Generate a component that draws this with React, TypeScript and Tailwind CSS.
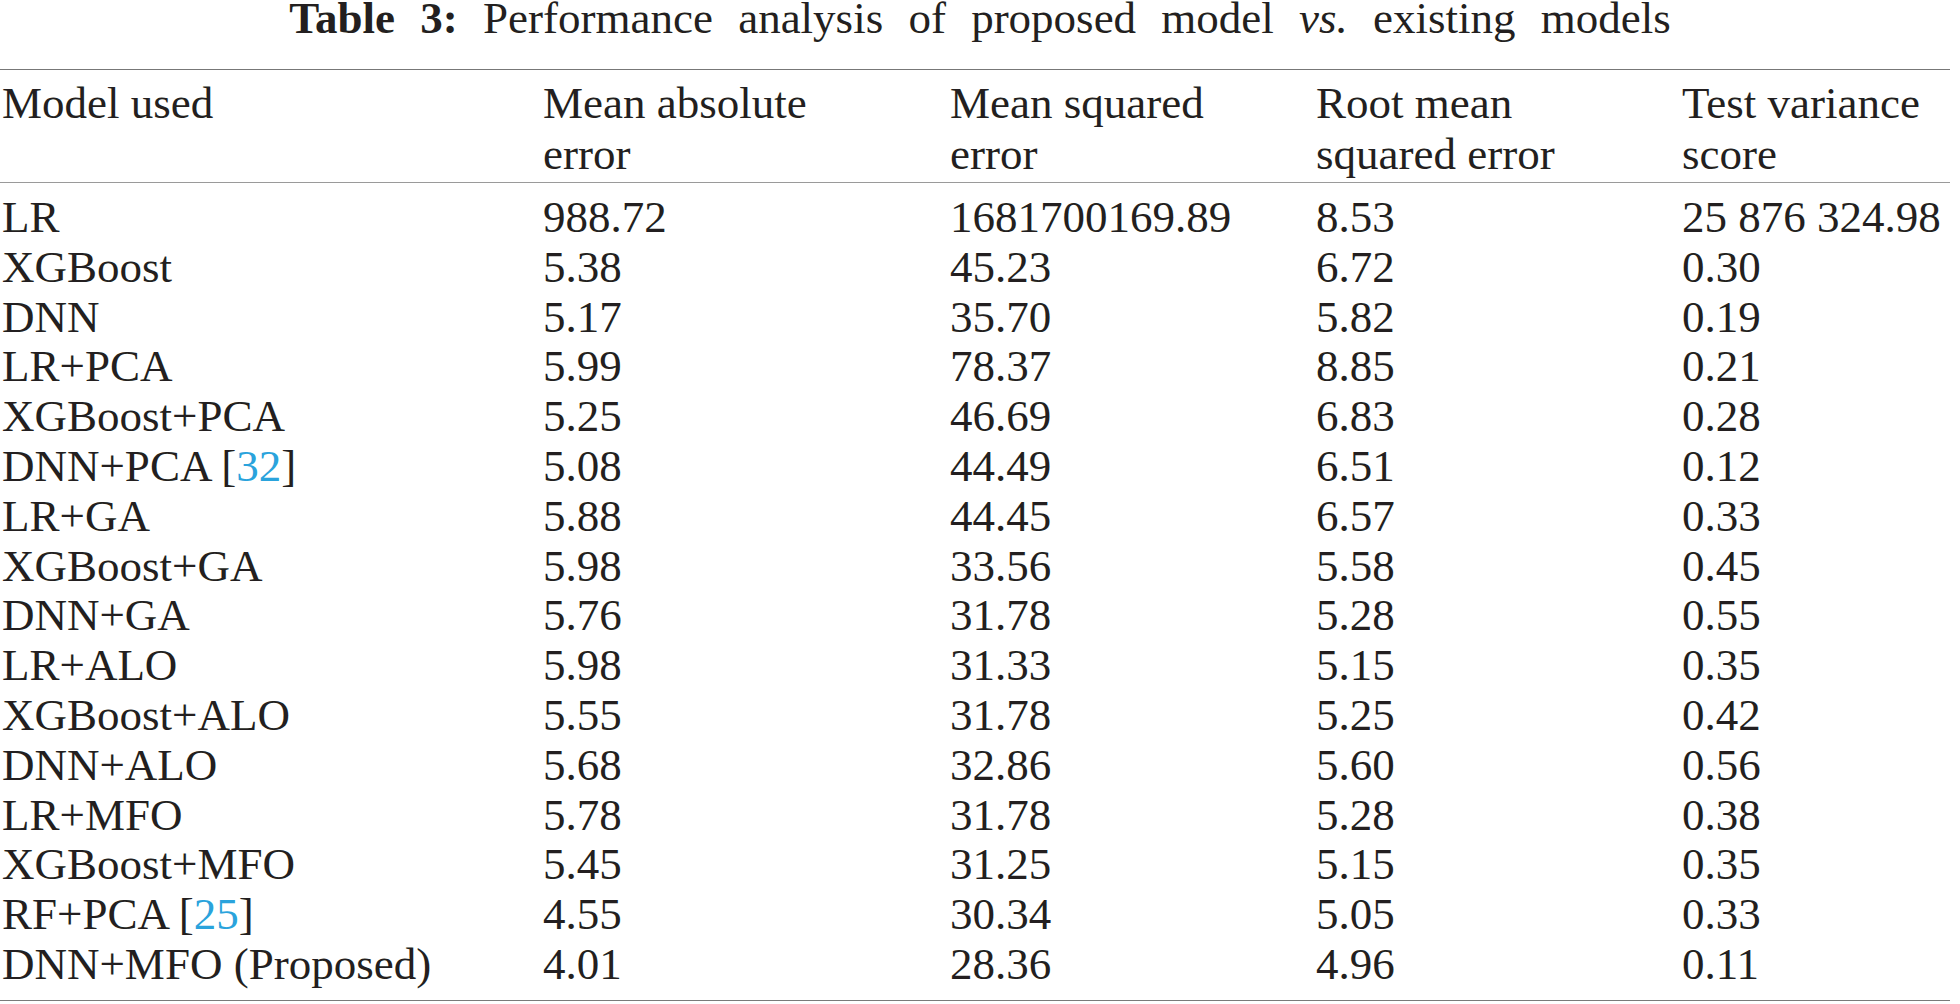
import React from 'react';

type Row = { model: string; cite?: string; mae: string; mse: string; rmse: string; tvs: string };

const rows: Row[] = [
  { model: 'LR', mae: '988.72', mse: '1681700169.89', rmse: '8.53', tvs: '25 876 324.98' },
  { model: 'XGBoost', mae: '5.38', mse: '45.23', rmse: '6.72', tvs: '0.30' },
  { model: 'DNN', mae: '5.17', mse: '35.70', rmse: '5.82', tvs: '0.19' },
  { model: 'LR+PCA', mae: '5.99', mse: '78.37', rmse: '8.85', tvs: '0.21' },
  { model: 'XGBoost+PCA', mae: '5.25', mse: '46.69', rmse: '6.83', tvs: '0.28' },
  { model: 'DNN+PCA', cite: '32', mae: '5.08', mse: '44.49', rmse: '6.51', tvs: '0.12' },
  { model: 'LR+GA', mae: '5.88', mse: '44.45', rmse: '6.57', tvs: '0.33' },
  { model: 'XGBoost+GA', mae: '5.98', mse: '33.56', rmse: '5.58', tvs: '0.45' },
  { model: 'DNN+GA', mae: '5.76', mse: '31.78', rmse: '5.28', tvs: '0.55' },
  { model: 'LR+ALO', mae: '5.98', mse: '31.33', rmse: '5.15', tvs: '0.35' },
  { model: 'XGBoost+ALO', mae: '5.55', mse: '31.78', rmse: '5.25', tvs: '0.42' },
  { model: 'DNN+ALO', mae: '5.68', mse: '32.86', rmse: '5.60', tvs: '0.56' },
  { model: 'LR+MFO', mae: '5.78', mse: '31.78', rmse: '5.28', tvs: '0.38' },
  { model: 'XGBoost+MFO', mae: '5.45', mse: '31.25', rmse: '5.15', tvs: '0.35' },
  { model: 'RF+PCA', cite: '25', mae: '4.55', mse: '30.34', rmse: '5.05', tvs: '0.33' },
  { model: 'DNN+MFO (Proposed)', mae: '4.01', mse: '28.36', rmse: '4.96', tvs: '0.11' },
];

// column starts in the reference: 2, 543, 950, 1316, 1682
const cols = 'grid grid-cols-[541px_407px_366px_366px_1fr] pl-[2px]';

const App: React.FC = () => {
  return (
    <div className="w-[1960px] h-[1004px] overflow-hidden bg-white text-[#231f20] text-[45px] font-['Liberation_Serif','Times_New_Roman',serif]">
      {/* Caption */}
      <div className="h-[36px] leading-[36px] text-center [word-spacing:14px]">
        <b>Table 3:</b> Performance analysis of proposed model <i>vs.</i> existing models
      </div>

      {/* Table */}
      <div className="mt-[33px] w-[1950px] border-t border-[#777777]">
        <div className={`${cols} pt-[8px] pb-[2px] leading-[51px] border-b border-[#9a9a9a]`}>
          <div>Model used</div>
          <div>Mean absolute<br />error</div>
          <div>Mean squared<br />error</div>
          <div>Root mean<br />squared error</div>
          <div>Test variance<br />score</div>
        </div>

        <div className="pt-[10px] pb-[10px] leading-[49.8px] border-b border-[#7a7a7a]">
          {rows.map((r) => (
            <div key={r.model} className={cols}>
              <div>
                {r.model}
                {r.cite && (
                  <>
                    {' '}[<span className="text-[#2aa3dc]">{r.cite}</span>]
                  </>
                )}
              </div>
              <div>{r.mae}</div>
              <div>{r.mse}</div>
              <div>{r.rmse}</div>
              <div className="whitespace-nowrap">{r.tvs}</div>
            </div>
          ))}
        </div>
      </div>
    </div>
  );
};

export default App;
